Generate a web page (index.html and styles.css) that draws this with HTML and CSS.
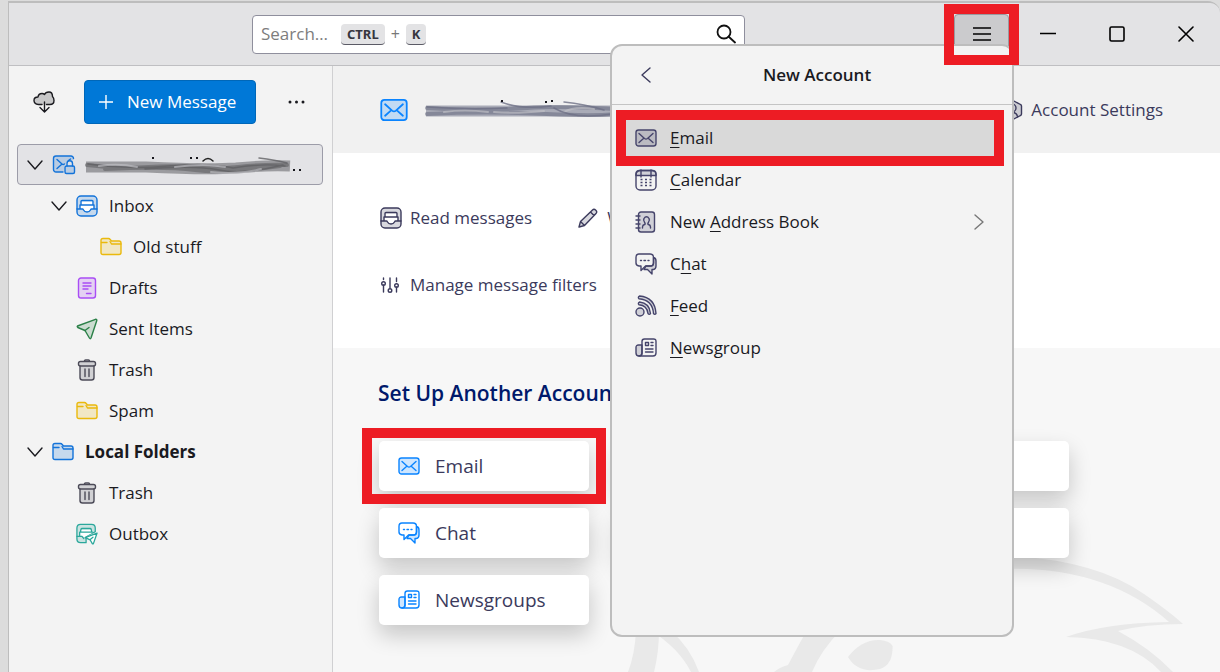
FILE: index.html
```html
<!DOCTYPE html>
<html lang="en">
<head>
    <meta charset="UTF-8">
    <meta name="viewport" content="width=device-width, initial-scale=1.0">
    <title>Mail - New Account</title>
    <link rel="stylesheet" href="styles.css">
</head>
<body>
    <!-- icon set -->
    <svg class="sprite" aria-hidden="true">
        <symbol id="i-mail" viewBox="0 0 22 22">
            <rect class="tint" x="1" y="3" width="20" height="16" rx="2.5"/>
            <path d="M4 6.500l5.500 5q1.500 1.200 3 0l5.500-5M4 15.500l4.500-4M18 15.500l-4.500-4"/>
        </symbol>
        <symbol id="i-mail-lock" viewBox="0 0 24 22">
            <path class="tint" d="M11.500 18H4a2.500 2.500 0 0 1-2.500-2.500v-11A2.500 2.500 0 0 1 4 2h15a2.500 2.500 0 0 1 2.500 2.500V6h-5l-4 6z" stroke="none"/>
            <path d="M11 18H4a2.500 2.500 0 0 1-2.500-2.500v-11A2.500 2.500 0 0 1 4 2h15a2.500 2.500 0 0 1 2.500 2.500"/>
            <path d="M5 5.500l5 4.500q1 1 2.500 0M18.500 5l-2 1.500M5 14.500l4.500-4"/>
            <rect class="tint" x="13" y="12" width="9.500" height="7.500" rx="1.500"/>
            <path d="M15 12V9.500a2.700 2.700 0 0 1 5.500 0V12"/>
        </symbol>
        <symbol id="i-inbox" viewBox="0 0 22 22">
            <rect class="tint" x="1" y="1" width="20" height="20" rx="4"/>
            <path class="blank" d="M4 14V10.500L5 6.500h12l1 4V14h-3.500l-1.500 2.500H9L7.500 14z" stroke="none"/>
            <path d="M1 14h5.500q.5 0 1 1 1 2 3.500 2t3.500-2q.5-1 1-1H21M4 13.500V10h14v3.500M5 10V6.500q0-1 1-1h10q1 0 1 1V10"/>
        </symbol>
        <symbol id="i-folder" viewBox="0 0 22 22">
            <path class="tint" d="M1 16.500V4.500Q1 2.500 3 2.500h5.500q1 0 1.500.8L11.500 5H19q2 0 2 2v9.500q0 2-2 2H3q-2 0-2-2z"/>
            <path d="M1.500 6.500H7M10 5.500L11.500 8H21"/>
        </symbol>
        <symbol id="i-drafts" viewBox="0 0 22 22">
            <rect class="tint" x="2.500" y="1" width="17" height="20" rx="2.500"/>
            <path d="M7 6h8M7 9h8M7 12h5M10.500 16.500h4.500"/>
        </symbol>
        <symbol id="i-sent" viewBox="0 0 22 22">
            <path class="tint" d="M1.500 8L19.500 1.300q1.500-.3 1.300 1.200L15 20q-.7 1.500-1.600 0L9 12.500 1.800 9.500q-1-.8-.3-1.500z"/>
            <path d="M9 12.500l4-3"/>
        </symbol>
        <symbol id="i-trash" viewBox="0 0 22 22">
            <path class="tint" d="M4 7v11.500Q4 21 6.500 21h9q2.500 0 2.500-2.500V7"/>
            <rect class="tint" x="2.500" y="2.500" width="17" height="4.500" rx="2"/>
            <path d="M8.500 2q0-1 1-1h3q1 0 1 1M9 10v7.500M13 10v7.500"/>
        </symbol>
        <symbol id="i-outbox" viewBox="0 0 24 23">
            <path class="tint" d="M11 21H5q-4 0-4-4V5q0-4 4-4h12q4 0 4 4v4L11 14z"/>
            <path class="blank" d="M4 13.500V10l1-3.500h12l1 3.500-9 5-2-1.500z" stroke="none"/>
            <path d="M1 14h5.500l2 2.500M4 13.500V9.500h14M5 9.500q0-4 1.500-4h9q1.500 0 1.500 4"/>
            <path class="blank" d="M10 15.500L23 10.500 19 22q-.8.600-1.200 0L15.500 18z"/>
            <path d="M15.500 17.500l3-2.500"/>
        </symbol>
        <symbol id="i-calendar" viewBox="0 0 22 22">
            <rect x="1" y="1.500" width="20" height="19.500" rx="4"/>
            <path class="tint" d="M1 6.500V5q0-3.500 4-3.500h12q4 0 4 3.500v1.500z"/>
            <path d="M6 1v7M16 1v7"/>
            <path d="M5.500 10.500h2M10 10.500h2M14.500 10.500h2M5.500 13.500h2M10 13.500h2M14.500 13.500h2M5.500 16.500h2M10 16.500h2M14.500 16.500h2" stroke-linecap="butt"/>
        </symbol>
        <symbol id="i-book" viewBox="0 0 22 22">
            <rect class="tint" x="3.500" y="1" width="16" height="20" rx="2.500"/>
            <path d="M1 5h4M1 9h4M1 13h4M1 17h4M7.500 17v-1q0-2 2-2.500h.5q.5-1-.5-2.300Q8 9 9 7.500q1-1.700 2.500-1.700T14 7.500q1 1.500-.5 3.700-1 1.300-.5 2.300h.5q2 .5 2 2.500v1"/>
        </symbol>
        <symbol id="i-chat" viewBox="0 0 22 22">
            <path class="tint" d="M18.500 4.500Q21 5 21 8v5q0 3-2.500 3.500H17V21l-4.500-4.500H9L11 13h5q2.500 0 2.500-3z"/>
            <path d="M4 1h11q3.500 0 3.500 3.500V10q0 3-3.500 3h-4.500L6 17.500V13H4q-3-.5-3-3V4.500Q1 1 4 1z"/>
            <path d="M5.500 7.500h1M9 7.500h1.500M13 7.500h1" />
        </symbol>
        <symbol id="i-feed" viewBox="0 0 22 22">
            <circle class="tint" cx="5" cy="17" r="4"/>
            <path class="tint" d="M4.500 1Q20 2.500 21 18.500q-1.200 1.700-2.500 0Q17.500 5 4 3.800 2.500 2.300 4.500 1z"/>
            <path class="tint" d="M4.500 7Q14.500 8 15.500 18.500q-1.200 1.700-2.500 0Q12 10.500 4 9.800 2.500 8.300 4.500 7z"/>
        </symbol>
        <symbol id="i-news" viewBox="0 0 22 22">
            <path class="tint" d="M7 8H3.500Q1 8 1 10.500v5.500q0 3 3 3t3-3z"/>
            <path d="M4 19h14q3 0 3-3V4.500Q21 2 18.500 2h-9Q7 2 7 4.500V16q0 3-3 3z"/>
            <path d="M10.500 5.500h3v3h-3zM16 5.500h2M16 8.500h2M10.500 12h7.500M10.500 15h7.500"/>
        </symbol>
        <symbol id="i-pencil" viewBox="0 0 22 22">
            <path class="tint" d="M2 20l1.500-5.500L15.500 3q1.500-1.500 3.300.2t.2 3.300L7.500 18.500zM13.500 5l3.500 3.500M3.500 14.500l4 4"/>
        </symbol>
        <symbol id="i-filters" viewBox="0 0 22 22">
            <path d="M3.500 4v1.500M3.500 11v7M10 4v10M16.500 4v3.500M16.500 13v5"/>
            <circle cx="3.500" cy="9.500" r="1.800"/><circle cx="10" cy="16.500" r="1.800"/><circle cx="16.500" cy="11.500" r="1.800"/>
        </symbol>
        <symbol id="i-account" viewBox="0 0 22 22">
            <path class="tint" d="M11 1l8.500 4.500q1 .5 1 1.500v8q0 1-1 1.500L11 21l-8.500-4.500q-1-.5-1-1.500V7q0-1 1-1.500z"/>
            <circle cx="11" cy="9" r="4"/>
            <path d="M5.500 17.500q.5-3 3.500-4M16.500 17.500q-.5-3-3.500-4"/>
        </symbol>
        <symbol id="i-cloud" viewBox="0 0 22 22">
            <path class="tint" d="M9 13.500H5.500Q1 13 1 9.500T5 6q.5-3.500 4-3.500 1.500 0 2.500 1Q12.500 1 16 1t3.500 4.500Q21 7 21 9.500q0 4-4 4h-3.500"/>
            <path d="M11.500 11v9.500M7 16.500l4.500 4.500 4.500-4.500"/>
        </symbol>
        <symbol id="i-down" viewBox="0 0 16 16"><path d="M1 4l7 8 7-8"/></symbol>
        <symbol id="i-right" viewBox="0 0 16 16"><path d="M4 1l8 7-8 7"/></symbol>
        <symbol id="i-left" viewBox="0 0 16 16"><path d="M12 1L4 8l8 7"/></symbol>
    </svg>

    <div class="window">
        <header class="titlebar">
            <form class="search" role="search">
                <input type="text" class="search-input" placeholder="Search…" aria-label="Search">
                <span class="shortcut"><kbd>CTRL</kbd>+<kbd>K</kbd></span>
                <button type="button" class="search-btn" aria-label="Search">
                    <svg viewBox="0 0 20 20"><circle cx="8" cy="8" r="6.500"/><path d="M12.500 12.500l6.500 6"/></svg>
                </button>
            </form>

            <div class="window-controls">
                <div class="app-menu callout">
                    <button type="button" class="menu-btn" aria-label="Application menu">
                        <svg viewBox="0 0 18 14"><path d="M0 1h18M0 7h18M0 13h18"/></svg>
                    </button>
                </div>
                <button type="button" class="control-btn" aria-label="Minimize"><svg viewBox="0 0 16 16"><path d="M0 7.500h15.500"/></svg></button>
                <button type="button" class="control-btn" aria-label="Maximize"><svg viewBox="0 0 16 16"><rect x="1" y="1" width="14" height="14" rx="1.500"/></svg></button>
                <button type="button" class="control-btn" aria-label="Close"><svg viewBox="0 0 16 16"><path d="M1 1l14 14M15 1L1 15"/></svg></button>
            </div>
        </header>

        <div class="content">
            <nav class="sidebar">
                <div class="sidebar-header">
                    <button type="button" class="plain-btn" aria-label="Get messages"><svg class="icon"><use href="#i-cloud"/></svg></button>
                    <button type="button" class="new-message">
                        <svg class="plus" viewBox="0 0 14 14"><path d="M7 0v14M0 7h14"/></svg>
                        New Message
                    </button>
                    <button type="button" class="plain-btn" aria-label="More options">
                        <svg class="dots" viewBox="0 0 18 4"><circle cx="2" cy="2" r="1.500"/><circle cx="8.500" cy="2" r="1.500"/><circle cx="15" cy="2" r="1.500"/></svg>
                    </button>
                </div>

                <ul class="folder-tree">
                    <li class="folder selected">
                        <svg class="twisty"><use href="#i-down"/></svg>
                        <svg class="icon icon-wide blue"><use href="#i-mail-lock"/></svg>
                        <svg class="scribble" viewBox="0 0 218 24">
                            <path class="s-soft" d="M1 14h60q60 3 90 1 30-3 54-2"/>
                            <path class="s-mid" d="M2 12q30 4 62 2t70 2q40-5 68-4M20 16q60-3 90 1t85-4"/>
                            <path class="s-dark" d="M3 11q40 6 80 2t65 2q30-5 52-2M60 16q50-4 74 1t64-5M174 5q16 2 28 5"/>
                            <path class="s-light" d="M14 13q20-3 38 1M90 14q30-4 50 0M126 19q28 3 50-3"/>
                            <path class="s-ink" d="M118 8q5-5 10 0"/>
                            <path class="s-dot" d="M67 5h2M105 5h2M111 5h2M208 17h2M214 17h2"/>
                        </svg>
                    </li>
                    <li class="folder level-2"><svg class="twisty"><use href="#i-down"/></svg><svg class="icon blue"><use href="#i-inbox"/></svg>Inbox</li>
                    <li class="folder level-3"><svg class="icon yellow"><use href="#i-folder"/></svg>Old stuff</li>
                    <li class="folder level-2"><span class="twisty"></span><svg class="icon purple"><use href="#i-drafts"/></svg>Drafts</li>
                    <li class="folder level-2"><span class="twisty"></span><svg class="icon green"><use href="#i-sent"/></svg>Sent Items</li>
                    <li class="folder level-2"><span class="twisty"></span><svg class="icon gray"><use href="#i-trash"/></svg>Trash</li>
                    <li class="folder level-2"><span class="twisty"></span><svg class="icon yellow"><use href="#i-folder"/></svg>Spam</li>
                    <li class="folder account"><svg class="twisty"><use href="#i-down"/></svg><svg class="icon blue"><use href="#i-folder"/></svg>Local Folders</li>
                    <li class="folder level-2"><span class="twisty"></span><svg class="icon gray"><use href="#i-trash"/></svg>Trash</li>
                    <li class="folder level-2"><span class="twisty"></span><svg class="icon teal"><use href="#i-outbox"/></svg>Outbox</li>
                </ul>
            </nav>

            <main class="account-central">
                <div class="account-header">
                    <svg class="icon-large bright"><use href="#i-mail"/></svg>
                    <svg class="scribble navy" viewBox="0 0 218 24">
                        <path class="s-soft" d="M2 13h216"/>
                        <path class="s-mid" d="M3 10q60 3 100 0t115 3M3 16q60-3 120 0t90-2"/>
                        <path class="s-light" d="M20 14q20-3 44 0M70 14q20 2 50-1M140 14q10-6 30-3"/>
                        <path class="s-dark" d="M3 9q40 3 80 1M77 4q20 8 50 4M140 4q20 2 40 8M130 10q20 12 58 6"/>
                        <path class="s-dot" d="M77 3h2M121 4h2M127 3h2"/>
                    </svg>
                    <a href="#" class="link settings-link"><svg class="icon"><use href="#i-account"/></svg>Account Settings</a>
                </div>

                <section class="actions">
                    <div class="action-row">
                        <a href="#" class="link"><svg class="icon"><use href="#i-inbox"/></svg>Read messages</a>
                        <a href="#" class="link"><svg class="icon"><use href="#i-pencil"/></svg>Write</a>
                    </div>
                    <div class="action-row">
                        <a href="#" class="link"><svg class="icon"><use href="#i-filters"/></svg>Manage message filters</a>
                    </div>
                </section>

                <section class="setup">
                    <svg class="watermark" viewBox="333 540 887 132" aria-hidden="true">
                        <path d="M1000 556Q1092 558 1144 594 1170 612 1183 624 1145 624 1118 631 1150 648 1173 672H1161Q1130 638 1066 637 1105 623 1169 622 1105 565 1000 569z"/>
                        <path d="M848 657Q862 639 880 640 890 641 892.600 646 893 665 880 669 858 674 848 657z"/>
                        <path d="M636 630h23q0 22-5 42h-26q7-18 8-42zM650 630h20q20 17 29 42h-8q-12-24-41-42z"/>
                        <path d="M807 630h34q-20 20-29 42h-38q6-5 14-7 9-17 19-35z"/>
                    </svg>
                    <h2>Set Up Another Account</h2>
                    <div class="cards">
                        <div class="callout">
                            <button type="button" class="card"><svg class="icon"><use href="#i-mail"/></svg>Email</button>
                        </div>
                        <button type="button" class="card" aria-label="Address Book"></button>
                        <button type="button" class="card" aria-label="Calendar"></button>
                        <button type="button" class="card"><svg class="icon"><use href="#i-chat"/></svg>Chat</button>
                        <button type="button" class="card" aria-label="Filelink"></button>
                        <button type="button" class="card" aria-label="Feeds"></button>
                        <button type="button" class="card"><svg class="icon"><use href="#i-news"/></svg>Newsgroups</button>
                    </div>
                </section>
            </main>
        </div>
    </div>

    <!-- app menu popup -->
    <div class="popup" role="menu">
        <div class="popup-header">
            <button type="button" class="back-btn" aria-label="Back"><svg class="twisty"><use href="#i-left"/></svg></button>
            <h1>New Account</h1>
        </div>
        <div class="menu-list">
            <button type="button" role="menuitem" class="menu-item callout active"><svg class="icon"><use href="#i-mail"/></svg><span><u>E</u>mail</span></button>
            <button type="button" role="menuitem" class="menu-item"><svg class="icon"><use href="#i-calendar"/></svg><span><u>C</u>alendar</span></button>
            <button type="button" role="menuitem" class="menu-item"><svg class="icon"><use href="#i-book"/></svg><span>New <u>A</u>ddress Book</span><svg class="twisty"><use href="#i-right"/></svg></button>
            <button type="button" role="menuitem" class="menu-item"><svg class="icon"><use href="#i-chat"/></svg><span>C<u>h</u>at</span></button>
            <button type="button" role="menuitem" class="menu-item"><svg class="icon"><use href="#i-feed"/></svg><span><u>F</u>eed</span></button>
            <button type="button" role="menuitem" class="menu-item"><svg class="icon"><use href="#i-news"/></svg><span><u>N</u>ewsgroup</span></button>
        </div>
    </div>
</body>
</html>
```

FILE: styles.css
```css
:root {
    --red: #ed1c24;
    --border: #bdbdbd;
    --ink: #1a1a1f;
    --navy: #3b3a5c;
    --panel: #f3f3f3;
}

* {
    margin: 0;
    padding: 0;
    box-sizing: border-box;
}

body {
    background: #dcdcdc;
    color: var(--ink);
    font-family: "Open Sans", "Noto Sans", sans-serif;
    font-size: 17px;
    line-height: 24px;
    padding: 1px 0 0 8px;
    height: 100vh;
    overflow: hidden;
}

button,
input {
    font: inherit;
    color: inherit;
    background: none;
    border: none;
}

svg {
    display: block;
    flex: none;
    fill: none;
    stroke: currentColor;
    stroke-width: 1.4;
    stroke-linecap: round;
    stroke-linejoin: round;
}

.sprite {
    position: absolute;
    width: 0;
    height: 0;
}

.tint {
    fill: currentColor;
    fill-opacity: 0.2;
}

.blank {
    fill: #fff;
}

.icon {
    width: 22px;
    height: 22px;
}

.icon-wide {
    width: 24px;
}

.icon-large {
    width: 28px;
    height: 28px;
}

.twisty {
    width: 16px;
    height: 16px;
}

.blue { color: #1373d9; }
.bright { color: #0a84ff; }
.yellow { color: #eab90c; }
.purple { color: #a94df5; }
.green { color: #2b8048; }
.gray { color: #4c4b58; }
.teal { color: #2aa79b; }

/* red frame round the steps of the walkthrough */
.callout {
    position: relative;
}

.callout::after {
    content: "";
    position: absolute;
    inset: -10px;
    border: 10px solid var(--red);
    z-index: 20;
    pointer-events: none;
}

.window {
    height: 100%;
    display: flex;
    flex-direction: column;
    border: solid var(--border);
    border-width: 2px 0 0 1px;
    border-top-right-radius: 12px;
}

/* title bar */
.titlebar {
    display: flex;
    align-items: center;
    height: 63px;
    flex: none;
    padding-left: 243px;
    background: #e3e3e5;
    border-bottom: 1px solid #bfbfc2;
    border-top-right-radius: 10px;
}

.search {
    flex: 0 1 493px;
    height: 39px;
    display: flex;
    align-items: center;
    padding: 0 8px;
    background: #fff;
    border: 1px solid #8f8f9d;
    border-radius: 4px;
}

.search-input {
    width: 80px;
    outline: none;
}

.search-input::placeholder {
    color: #7d7d7d;
    opacity: 1;
}

.shortcut {
    display: flex;
    align-items: center;
    gap: 6px;
    flex: 1;
    color: #777;
    font-size: 16px;
}

kbd {
    height: 21px;
    padding: 0 6px;
    background: #e3e3e5;
    border-bottom: 1px solid #5b5b66;
    border-radius: 4px;
    color: #36363f;
    font: bold 13px/20px "Noto Sans", sans-serif;
}

.search-btn svg {
    width: 20px;
    height: 20px;
    stroke: #111;
    stroke-width: 1.8;
}

.window-controls {
    display: flex;
    align-items: center;
    margin-left: auto;
}

.app-menu {
    margin-right: 4px;
}

.menu-btn {
    display: flex;
    align-items: center;
    justify-content: center;
    width: 55px;
    height: 41px;
    background: #cbcbcd;
    border: 1px solid #9a9aa0;
    border-radius: 4px;
}

.menu-btn svg {
    width: 18px;
    height: 14px;
    stroke: #000;
}

.control-btn {
    width: 69px;
    height: 40px;
    display: flex;
    align-items: center;
    justify-content: center;
}

.control-btn svg {
    width: 16px;
    height: 16px;
    stroke: #000;
    stroke-width: 1.6;
}

.content {
    display: flex;
    flex: 1;
    min-height: 0;
}

/* folder pane */
.sidebar {
    width: 324px;
    flex: none;
    background: var(--panel);
    border-right: 1px solid #d0d0d2;
}

.sidebar-header {
    display: flex;
    align-items: center;
    padding: 14px 26px 20px 24px;
}

.plain-btn {
    display: flex;
    align-items: center;
}

.new-message {
    display: flex;
    align-items: center;
    gap: 14px;
    width: 172px;
    height: 44px;
    margin: 0 32px 0 29px;
    padding: 0 14px;
    background: #0078d7;
    border: 1px solid #0067b8;
    border-radius: 4px;
    color: #fff;
    white-space: nowrap;
}

.plus {
    width: 14px;
    height: 14px;
}

.dots {
    width: 18px;
    height: 4px;
    fill: currentColor;
    stroke: none;
}

.folder-tree {
    list-style: none;
    padding: 0 9px 0 8px;
}

.folder {
    display: flex;
    align-items: center;
    gap: 11px;
    height: 41px;
    padding-left: 10px;
    white-space: nowrap;
}

.folder .twisty {
    margin-right: -2px;
}

.selected {
    gap: 9px;
    padding-left: 9px;
    background: #e3e3e6;
    border: 1px solid #9c9ca8;
    border-radius: 4px;
}

.selected .twisty {
    margin-right: 0;
}

.level-2 {
    padding-left: 34px;
}

.level-3 {
    padding-left: 83px;
}

.account {
    font-weight: bold;
}

/* painted-over account name */
.scribble {
    width: 218px;
    height: 24px;
    color: #606064;
    overflow: visible;
}

.scribble.navy {
    color: #6e7186;
}

.s-soft { stroke-width: 11; opacity: 0.55; stroke-linecap: butt; }
.s-mid { stroke-width: 4; opacity: 0.6; }
.s-dark { stroke-width: 1.5; opacity: 0.8; }
.s-light { stroke: #c4c4ca; stroke-width: 2; opacity: 0.6; }
.s-ink { stroke: #222; stroke-width: 1.5; }
.s-dot { stroke: #16161c; stroke-width: 2; stroke-linecap: butt; }

/* account central */
.account-central {
    flex: 1;
    min-width: 0;
    display: flex;
    flex-direction: column;
    background: #fff;
    overflow: hidden;
}

.account-header {
    display: flex;
    align-items: center;
    gap: 16px;
    height: 87px;
    flex: none;
    padding: 0 57px 0 47px;
    background: #f1f1f1;
}

.link {
    display: flex;
    align-items: center;
    gap: 8px;
    color: var(--navy);
    text-decoration: none;
    white-space: nowrap;
}

.settings-link {
    margin-left: auto;
}

.actions {
    display: flex;
    flex-direction: column;
    gap: 43px;
    padding: 53px 47px 51px;
}

.action-row {
    display: flex;
    gap: 45px;
}

.setup {
    position: relative;
    flex: 1;
    padding: 30px 45px;
    background: #f7f7f7;
}

.watermark {
    position: absolute;
    left: 0;
    top: 192px;
    width: 887px;
    height: 132px;
    fill: #e9e9e9;
    stroke: none;
}

h2 {
    color: #00196b;
    font-size: 21px;
    font-weight: 600;
    line-height: 30px;
    margin-bottom: 33px;
}

.cards {
    display: grid;
    grid-template-columns: repeat(3, 210px);
    gap: 17px 30px;
    padding-left: 1px;
}

.card {
    position: relative;
    display: flex;
    align-items: center;
    gap: 15px;
    width: 210px;
    height: 50px;
    padding: 0 19px;
    background: #fff;
    border-radius: 5px;
    box-shadow: 0 10px 22px rgba(0, 0, 0, 0.2);
    color: var(--navy);
    font-size: 19px;
}

.card .icon {
    color: #0a84ff;
}

.cards .callout::after {
    inset: -13px -17px;
}

/* popup menu */
.popup {
    position: absolute;
    z-index: 10;
    top: 44px;
    left: 610px;
    width: 404px;
    height: 593px;
    background: var(--panel);
    border: 2px solid var(--border);
    border-radius: 12px;
}

.popup-header {
    display: grid;
    grid-template-columns: 40px 1fr 30px;
    align-items: center;
    height: 59px;
    padding: 0 14px;
    border-bottom: 1px solid #c4c4c4;
}

.back-btn {
    display: flex;
    justify-content: center;
    color: var(--navy);
}

h1 {
    font-size: 17px;
    font-weight: 600;
    text-align: center;
}

.menu-list {
    display: flex;
    flex-direction: column;
    gap: 6px;
    padding: 15px 18px 0 14px;
}

.menu-item {
    display: flex;
    align-items: center;
    gap: 13px;
    height: 36px;
    padding: 0 7px 0 9px;
    text-align: left;
}

.menu-item .icon {
    color: #45446b;
}

.menu-item .twisty {
    margin-left: auto;
    color: #777;
}

.menu-item.active {
    background: #d9d9d9;
}

u {
    text-underline-offset: 3px;
    text-decoration-thickness: 1px;
}
```
